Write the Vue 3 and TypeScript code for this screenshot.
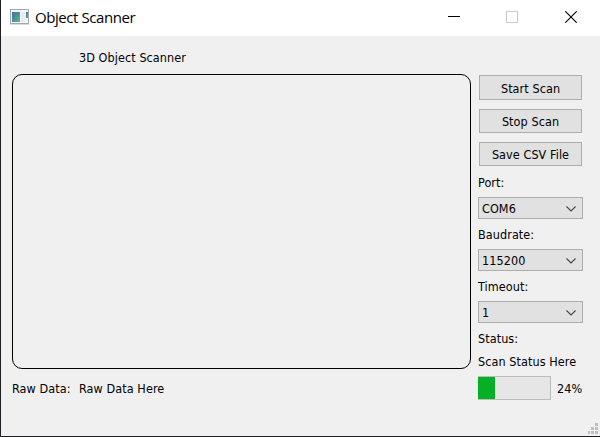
<script setup lang="ts">
import { ref } from 'vue'

interface Setting {
  label: string
  value: string
}

const actions: string[] = ['Start Scan', 'Stop Scan', 'Save CSV File']
const settings: Setting[] = [
  { label: 'Port:', value: 'COM6' },
  { label: 'Baudrate:', value: '115200' },
  { label: 'Timeout:', value: '1' },
]
const progress = ref<number>(24)
</script>

<template>
  <div class="window">
    <header class="titlebar">
      <svg class="app-icon" width="19" height="16" viewBox="0 0 19 16">
        <defs>
          <linearGradient id="pane" x1="0" y1="0" x2="1" y2="1">
            <stop offset="0" stop-color="#3d72a4" />
            <stop offset="1" stop-color="#5bb58a" />
          </linearGradient>
        </defs>
        <rect x="0.5" y="0.5" width="18" height="14" fill="#f4f5f6" stroke="#a3a8b0" />
        <rect x="0" y="15" width="19" height="1" fill="#d9dadc" />
        <rect x="2" y="3" width="8" height="10" fill="url(#pane)" />
        <rect x="11" y="3" width="4" height="10" fill="#e9ecef" />
        <rect x="16" y="3" width="2" height="6" fill="url(#pane)" />
      </svg>
      <span class="title">Object Scanner</span>
      <div class="controls">
        <svg width="12" height="12" viewBox="0 0 12 12"><path d="M0 5.5H12" stroke="#000" /></svg>
        <svg width="12" height="12" viewBox="0 0 12 12"><rect x="0.5" y="0.5" width="11" height="11" fill="none" stroke="#ccc" /></svg>
        <svg class="close" width="12" height="12" viewBox="0 0 12 12"><path d="M0.3 0.3L11.7 11.7M11.7 0.3L0.3 11.7" stroke="#000" stroke-width="1.1" /></svg>
      </div>
    </header>

    <main class="content">
      <section class="scan">
        <div class="heading">3D Object Scanner</div>
        <div class="viewport"></div>
        <div class="raw">
          <span class="raw-label">Raw Data:</span>
          <span>Raw Data Here</span>
        </div>
      </section>

      <aside class="side">
        <div class="actions">
          <button v-for="action in actions" :key="action" type="button">{{ action }}</button>
        </div>
        <div v-for="setting in settings" :key="setting.label" class="setting">
          <span class="label">{{ setting.label }}</span>
          <div class="combo">
            <span>{{ setting.value }}</span>
            <svg width="10" height="6" viewBox="0 0 10 6"><path d="M0.5 0.5L5 5L9.5 0.5" fill="none" stroke="#444" stroke-width="1.1" /></svg>
          </div>
        </div>
        <span class="label status">Status:</span>
        <span class="label message">Scan Status Here</span>
        <div class="progress">
          <div class="track"><div class="fill" :style="{ width: progress + '%' }"></div></div>
          <span class="percent">{{ progress }}%</span>
        </div>
      </aside>
    </main>

    <footer class="statusbar">
      <svg width="10" height="11" viewBox="0 0 10 11" fill="#bfbfbf">
        <path d="M7 0h3v3h-3zM3 4h3v3h-3zM7 4h3v3h-3zM0 8h2v3h-2zM3 8h3v3h-3zM7 8h3v3h-3z" />
      </svg>
    </footer>
  </div>
</template>

<style>
body {
  margin: 0;
  overflow: hidden;
}
</style>

<style scoped>
.window {
  box-sizing: border-box;
  width: 600px;
  height: 437px;
  display: flex;
  flex-direction: column;
  background: #f0f0f0;
  border-left: 1px solid #202024;
  border-bottom: 1px solid #202024;
  color: #000;
  font: 12.5px/16px 'DejaVu Sans Condensed', 'DejaVu Sans', sans-serif;
  font-stretch: condensed;
  letter-spacing: 0.08px;
  white-space: nowrap;
}
.titlebar {
  height: 36px;
  flex: none;
  display: flex;
  background: #fff;
}
.app-icon {
  margin: 9px 0 0 9px;
}
.title {
  margin: 7px 0 0 6px;
  font: 15px/20px 'Open Sans', sans-serif;
  letter-spacing: -0.43px;
}
.controls {
  margin: 11px 23px 0 auto;
  display: flex;
  gap: 46px;
}
.controls svg {
  display: block;
}
.controls .close {
  margin-left: 1px;
}
.content {
  display: flex;
  height: 364px;
  padding-left: 11px;
}
.scan {
  width: 459px;
}
.heading {
  padding: 14px 0 0 67px;
  height: 24px;
}
.viewport {
  box-sizing: border-box;
  height: 295px;
  border: 1px solid #000;
  border-radius: 10px;
}
.raw {
  display: flex;
  padding-top: 12px;
}
.raw-label {
  width: 67px;
}
.side {
  width: 105px;
  margin-left: 7px;
  padding-top: 39px;
  display: flex;
  flex-direction: column;
}
.actions {
  display: grid;
  grid-template-rows: 25px 24px 24px;
  gap: 9px;
  padding: 0 1px;
  margin-bottom: 9px;
}
button {
  box-sizing: border-box;
  padding: 2px 0 0;
  border: 1px solid #adadad;
  background: #e1e1e1;
  color: #000;
  font: inherit;
  letter-spacing: inherit;
}
.setting {
  height: 52px;
}
.label {
  display: block;
  height: 16px;
}
.combo {
  box-sizing: border-box;
  height: 22px;
  margin-top: 6px;
  padding: 1px 6px 0 3px;
  border: 1px solid #adadad;
  background: #e1e1e1;
  display: flex;
  align-items: center;
  justify-content: space-between;
}
.message {
  margin-top: 7px;
}
.progress {
  margin-top: 6px;
  display: flex;
  align-items: center;
  gap: 6px;
}
.percent {
  padding-top: 2px;
}
.track {
  box-sizing: border-box;
  width: 73px;
  height: 24px;
  border: 1px solid #bcbcbc;
  border-left: 0;
  background: #e6e6e6;
}
.fill {
  height: 100%;
  background: #06b025;
}
.statusbar {
  flex: 1;
  display: flex;
  justify-content: flex-end;
  align-items: flex-end;
  padding: 0 2px 2px 0;
}
</style>
